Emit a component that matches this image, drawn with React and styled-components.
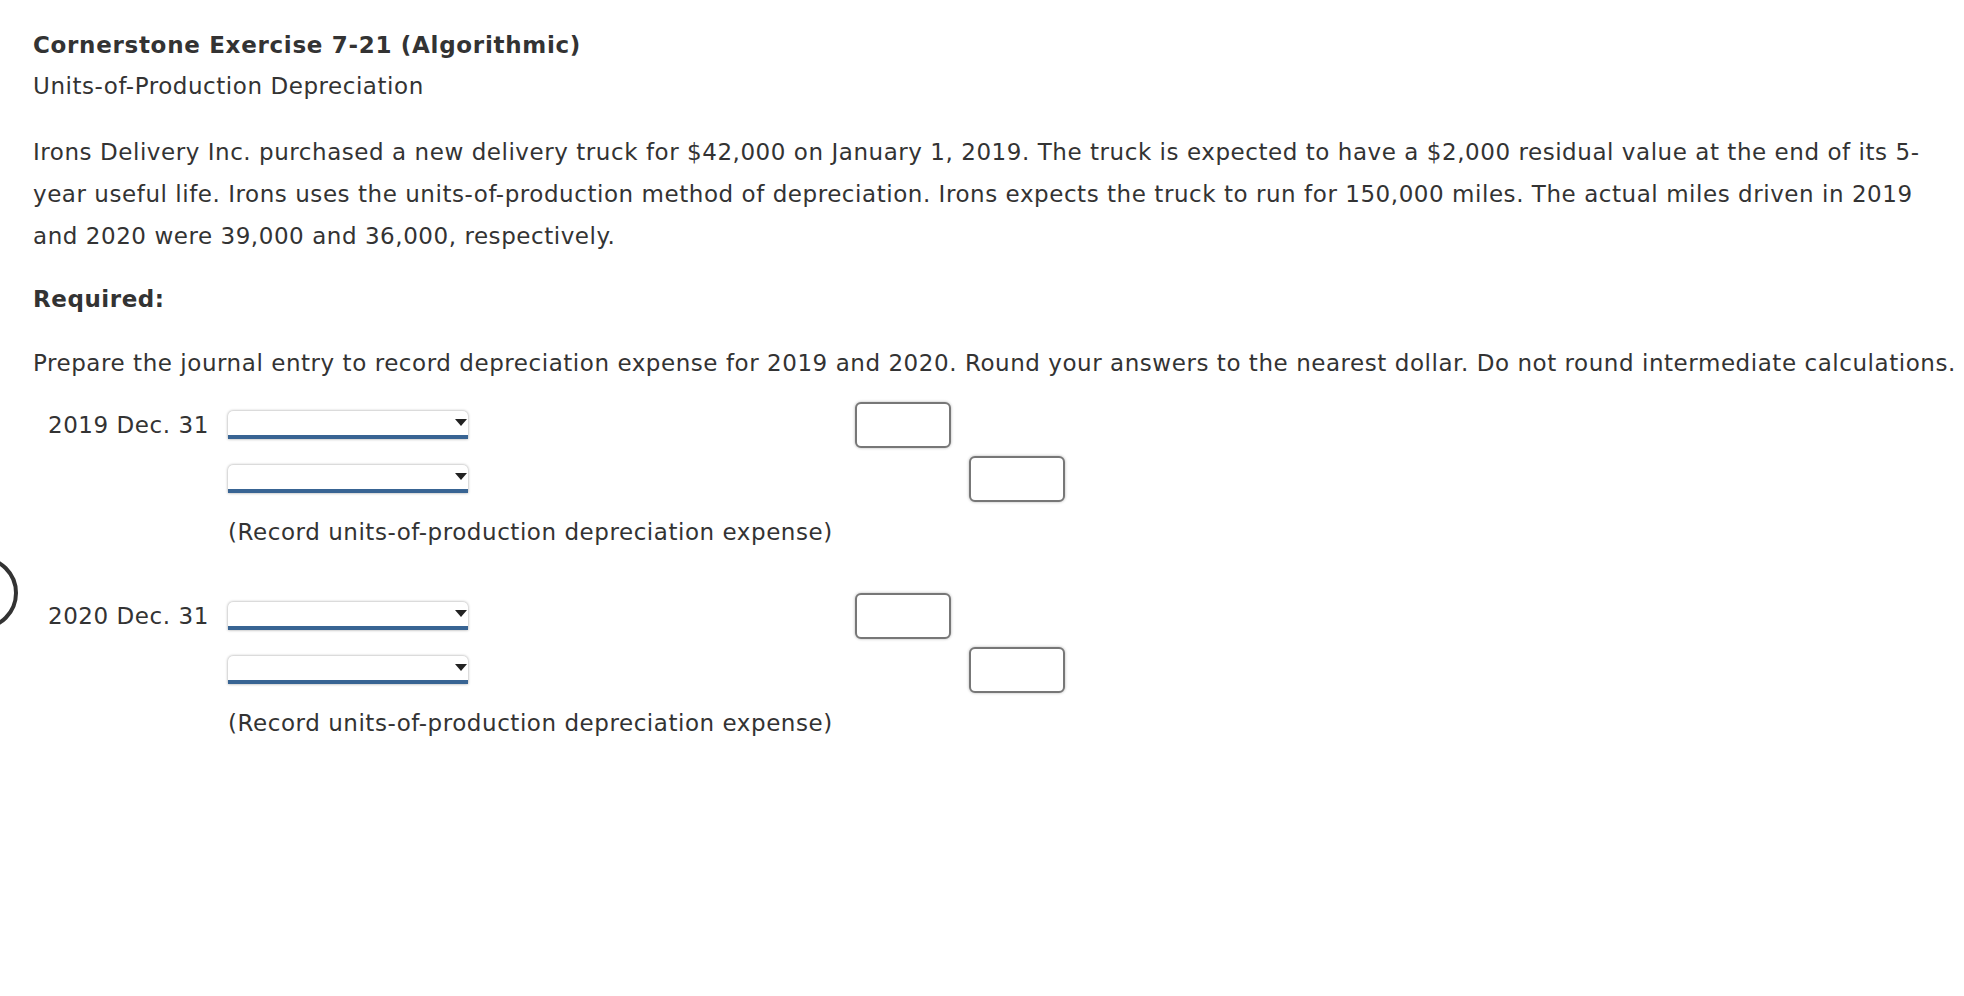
import React from "react";
import styled, { createGlobalStyle } from "styled-components";

const GlobalStyle = createGlobalStyle`
  html, body {
    margin: 0;
    padding: 0;
    background: #ffffff;
  }
  body {
    font-family: "DejaVu Sans", Verdana, sans-serif;
    color: #333333;
    overflow: hidden;
  }
`;

const Page = styled.div`
  position: relative;
  padding: 25px 0 0 33px;
  min-height: 996px;
  box-sizing: border-box;
  font-size: 23px;
  letter-spacing: 0.55px;
`;

const Title = styled.h1`
  margin: 0;
  font-size: 23px;
  font-weight: bold;
  line-height: 41px;
  letter-spacing: 0.7px;
  color: #333;
`;

const Subtitle = styled.div`
  line-height: 41px;
`;

const Paragraph = styled.p`
  margin: ${(p) => p.$top || 0}px 0 0 0;
  line-height: 42px;
  width: ${(p) => (p.$nowrap ? "auto" : "1910px")};
  white-space: ${(p) => (p.$nowrap ? "nowrap" : "normal")};
  font-weight: ${(p) => (p.$bold ? "bold" : "normal")};
`;

const Journal = styled.div`
  margin-top: 14px;
  display: flex;
  flex-direction: column;
`;

const EntryRow = styled.div`
  display: grid;
  grid-template-columns: 195px 627px 114px 96px;
  align-items: center;
  height: ${(p) => p.$height || 54}px;
  margin-top: ${(p) => p.$top || 0}px;
`;

const DateLabel = styled.div`
  padding-left: 15px;
  white-space: nowrap;
`;

const SelectBox = styled.div`
  position: relative;
  width: 240px;
  height: 24px;
  background: #fff;
  border-radius: 5px 5px 0 0;
  border-bottom: 4px solid #386493;
  box-shadow: 0 0 3px rgba(0, 0, 0, 0.4);
  box-sizing: content-box;
`;

const Arrow = styled.span`
  position: absolute;
  right: 1px;
  top: 8px;
  width: 0;
  height: 0;
  border-left: 6px solid transparent;
  border-right: 6px solid transparent;
  border-top: 7px solid #222;
`;

const AmountInput = styled.div`
  grid-column: ${(p) => p.$col};
  width: 92px;
  height: 42px;
  border: 2px solid #777;
  border-radius: 6px;
  background: #fff;
  box-shadow: 0 0 3px rgba(0, 0, 0, 0.3);
`;

const Note = styled.div`
  grid-column: 2;
  white-space: nowrap;
`;

const EdgeCircle = styled.div`
  position: absolute;
  left: -56px;
  top: 556px;
  width: 66px;
  height: 66px;
  border: 4px solid #333;
  border-radius: 50%;
`;

function Select() {
  return (
    <SelectBox>
      <Arrow />
    </SelectBox>
  );
}

function Entry({ date, top }) {
  return (
    <>
      <EntryRow $top={top}>
        <DateLabel>{date}</DateLabel>
        <Select />
        <AmountInput $col={3} />
      </EntryRow>
      <EntryRow>
        <span />
        <Select />
        <AmountInput $col={4} />
      </EntryRow>
      <EntryRow $height={52}>
        <Note>(Record units-of-production depreciation expense)</Note>
      </EntryRow>
    </>
  );
}

export default function App() {
  return (
    <>
      <GlobalStyle />
      <Page>
        <Title>Cornerstone Exercise 7-21 (Algorithmic)</Title>
        <Subtitle>Units-of-Production Depreciation</Subtitle>
        <Paragraph $top={24}>
          Irons Delivery Inc. purchased a new delivery truck for $42,000 on January 1, 2019. The truck is
          expected to have a $2,000 residual value at the end of its 5-year useful life. Irons uses the
          units-of-production method of depreciation. Irons expects the truck to run for 150,000 miles. The
          actual miles driven in 2019 and 2020 were 39,000 and 36,000, respectively.
        </Paragraph>
        <Paragraph $top={21} $bold>Required:</Paragraph>
        <Paragraph $top={22} $nowrap>
          Prepare the journal entry to record depreciation expense for 2019 and 2020. Round your answers to the
          nearest dollar. Do not round intermediate calculations.
        </Paragraph>
        <Journal>
          <Entry date="2019 Dec. 31" />
          <Entry date="2020 Dec. 31" top={31} />
        </Journal>
        <EdgeCircle />
      </Page>
    </>
  );
}
